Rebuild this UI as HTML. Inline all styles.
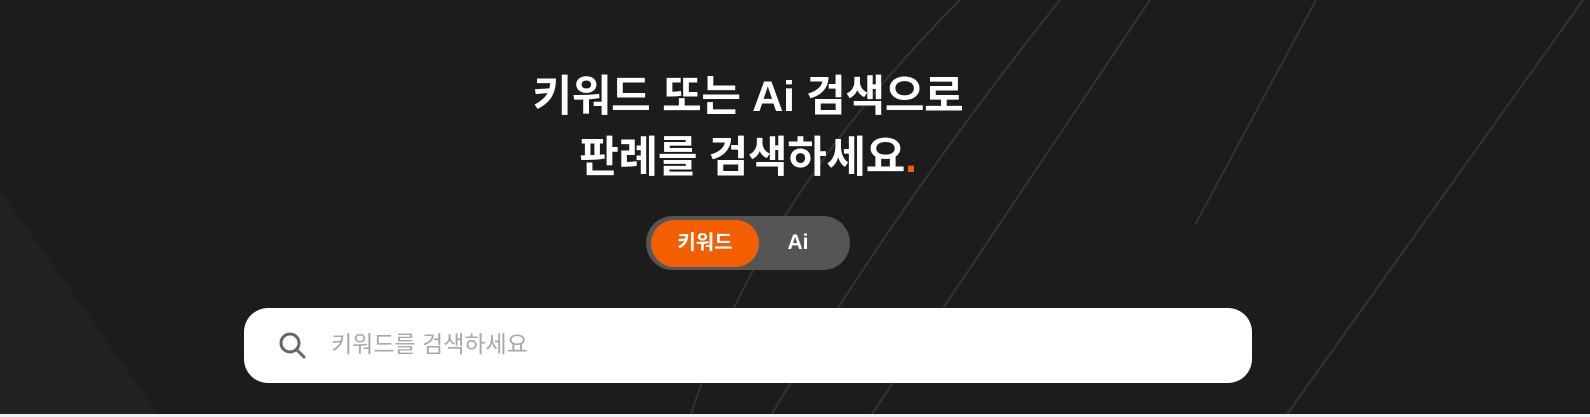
<!DOCTYPE html>
<html><head><meta charset="utf-8"><style>
html,body{margin:0;padding:0}
body{width:1590px;height:417px;background:#1c1c1c;position:relative;overflow:hidden;font-family:"Liberation Sans","Noto Sans CJK KR",sans-serif}
svg.bg{position:absolute;left:0;top:0}
.title{position:absolute;left:248px;width:1000px;text-align:center;color:#fff;font-weight:700;font-size:43px;line-height:61px;top:67px;letter-spacing:-0.3px}
.dot{color:#f06000}
.toggle{position:absolute;left:646px;top:216px;width:204px;height:54px;border-radius:27px;background:#555}
.on{position:absolute;left:5px;top:4px;width:108px;height:47px;border-radius:24px;background:#f35f00;color:#fff;font-weight:700;font-size:20px;text-align:center;line-height:47px}
.ai{position:absolute;left:132px;top:0;width:40px;line-height:54px;color:#fff;font-weight:700;font-size:21px;text-align:center}
.search{position:absolute;left:244px;top:308px;width:1008px;height:75px;border-radius:24px;background:#fff}
.ph{position:absolute;left:87px;top:0;line-height:73px;font-size:23px;color:#a8a8a8}
.strip{position:absolute;left:0;top:414px;width:1590px;height:3px;background:#eef0f3}
</style></head><body>
<svg class="bg" width="1590" height="417">
<polygon points="0,190 160,417 0,417" fill="#222"/>
<g stroke="#333" stroke-width="2" fill="none">
<path d="M1316,0 L1195,225"/>
<path d="M1583,0 L1285,417"/>
<path d="M960,0 Q760,200 690,417"/>
<path d="M1150,0 L870,417"/>
<path d="M1060,0 Q900,200 770,417"/>
</g>
</svg>
<div class="title">키워드 또는 Ai 검색으로<br>판례를 검색하세요<span class="dot">.</span></div>
<div class="toggle"><div class="on">키워드</div><div class="ai">Ai</div></div>
<div class="search">
<svg style="position:absolute;left:34px;top:23px" width="30" height="30" viewBox="0 0 30 30"><circle cx="12" cy="12" r="9" stroke="#6b6460" stroke-width="3" fill="none"/><path d="M18.5,18.5 L26,26" stroke="#6b6460" stroke-width="3" stroke-linecap="round"/></svg>
<div class="ph">키워드를 검색하세요</div>
</div>
<div class="strip"></div>
</body></html>
